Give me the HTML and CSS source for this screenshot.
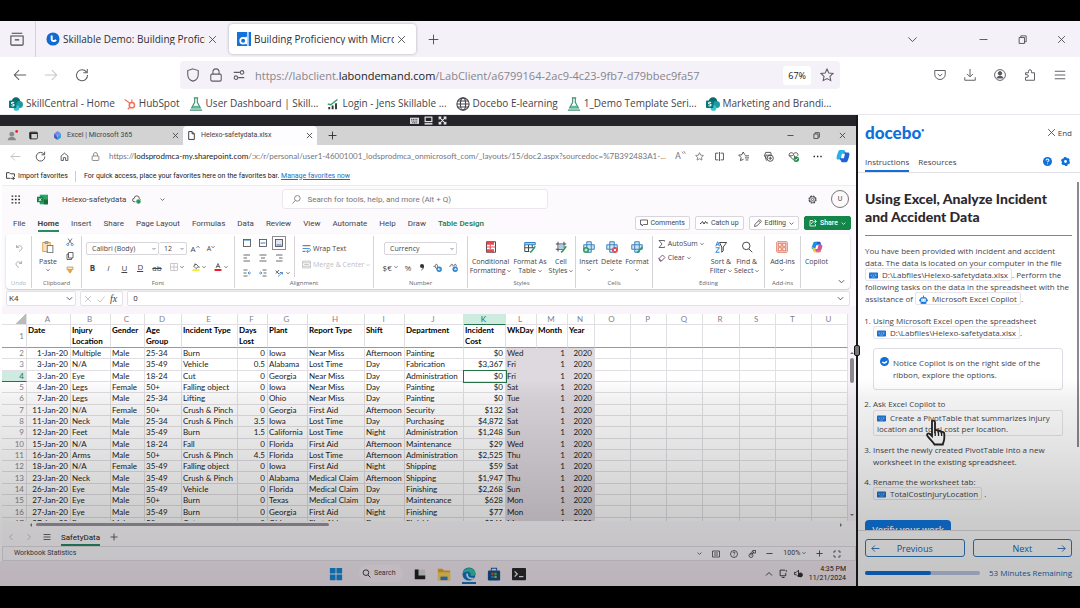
FILE: index.html
```html
<!DOCTYPE html>
<html lang="en">
<head>
  <meta charset="UTF-8">
  <meta name="viewport" content="width=device-width, initial-scale=1.0">
  <title>Building Proficiency with Microsoft Copilot</title>
  <link rel="stylesheet" href="styles.css">
</head>

<body>
  <!-- shared icons -->
  <svg class="sprite" aria-hidden="true">
    <symbol id="x" viewBox="0 0 16 16"><path d="M2 2l12 12M14 2L2 14"/></symbol>
    <symbol id="plus" viewBox="0 0 16 16"><path d="M8 1v14M1 8h14"/></symbol>
    <symbol id="minus" viewBox="0 0 16 16"><path d="M1 8h14"/></symbol>
    <symbol id="down" viewBox="0 0 16 16"><path d="M2 5l6 6 6-6"/></symbol>
    <symbol id="up" viewBox="0 0 16 16"><path d="M2 11l6-6 6 6"/></symbol>
    <symbol id="back" viewBox="0 0 16 16"><path d="M15 8H1.500M7 2.500L1.500 8 7 13.500"/></symbol>
    <symbol id="fwd" viewBox="0 0 16 16"><path d="M1 8h13.500M9 2.500L14.500 8 9 13.500"/></symbol>
    <symbol id="reload" viewBox="0 0 16 16"><path d="M13 4.500A6.300 6.300 0 1 0 14.300 8M14 1v4.500H9.500"/></symbol>
    <symbol id="restore" viewBox="0 0 16 16"><path d="M2 4.500h9.500V15H2zM5 4V1.500h9.500V12H12"/></symbol>
    <symbol id="star" viewBox="0 0 16 16"><path d="M8 1.200l2.100 4.400 4.800.600-3.500 3.400.900 4.800L8 12l-4.300 2.400.900-4.800L1.100 6.200l4.800-.600z"/></symbol>
    <symbol id="lock" viewBox="0 0 16 16"><rect x="2" y="7" width="12" height="8" rx="1.500"/><path d="M4.500 7V4.500a3.500 3.500 0 0 1 7 0V7"/></symbol>
    <symbol id="glass" viewBox="0 0 16 16"><circle cx="7" cy="6.500" r="5"/><path d="M10.500 10.500L15 15"/></symbol>
    <symbol id="glassflip" viewBox="0 0 16 16"><circle cx="9.500" cy="6" r="5"/><path d="M6 9.500L1 15"/></symbol>
    <symbol id="sharepoint" viewBox="0 0 16 16"><circle cx="8" cy="5" r="4.800" fill="#0b6a6e" stroke="none"/><circle cx="12" cy="8.500" r="4" fill="#1a9ba1" stroke="none"/><circle cx="8.500" cy="12.500" r="3.300" fill="#37c6d0" stroke="none"/><rect x="0" y="4" width="8.500" height="8.500" rx="1" fill="#04777c" stroke="none"/><path d="M5.800 6.300c-1-.700-3-.500-3 .700 0 1.300 3 .900 3 2.200 0 1.200-2 1.400-3.200.700" stroke="#fff" stroke-width="1.200"/></symbol>
    <symbol id="flask" viewBox="0 0 16 16"><path d="M5.500 1h5M6.500 1v5L3 12.500h10L9.500 6V1M1 15h14" stroke="#3f8f72" stroke-width="1.300"/><path d="M5 10h6l1.200 2.200H3.800z" fill="#57c297" stroke="none"/></symbol>
    <symbol id="keyb" viewBox="0 0 18 14"><rect x="0" y="1" width="18" height="12" rx="1.500" fill="#1a6fcf" stroke="none"/><path d="M3 4.500h2M7 4.500h2M11 4.500h4M3 7h3M8 7h2M12 7h3M5 10h8" stroke="#a8cdf5" stroke-width="1.200"/></symbol>
    <symbol id="copilot" viewBox="0 0 16 16"><path d="M5 1h4.500L12 5.500 8.500 6 6.500 12H2.500C0 12 .500 9 1.200 7L2.500 3C3 1.600 3.600 1 5 1z" fill="#28b3e6" stroke="none"/><path d="M11 15H6.500L4 10.500l3.500-.500 2-6h4c2.500 0 2 3 1.300 5l-1.300 4c-.500 1.400-1.100 2-3 2z" fill="#1f62d6" stroke="none"/><path d="M6.800 5.500h3.400L9 10.500H5.700z" fill="#fff" stroke="none"/></symbol>
  </svg>

  <!-- outer browser -->
  <header class="tabstrip">
    <button class="ib view" aria-label="View tabs"><svg class="i14" viewBox="0 0 16 16"><path d="M2 1.500h12M1 4.500h14v9.500a1 1 0 0 1-1 1H2a1 1 0 0 1-1-1zM5.500 9h5"/></svg></button>
    <a class="ftab" href="#"><svg class="i14" viewBox="0 0 16 16"><circle cx="8" cy="8" r="7.500" fill="#1269d3" stroke="none"/><path d="M6.500 4v4.500c0 2 3.500 2.500 5 .500" stroke="#fff" stroke-width="2.200"/></svg><span>Skillable Demo: Building Profici</span><svg class="i9"><use href="#x"/></svg></a>
    <a class="ftab on" href="#"><svg class="i14" viewBox="0 0 16 16"><path d="M0 0h16v16H0z" fill="#1172dc" stroke="none"/><path d="M12.500 0v16" stroke="#fff" stroke-width="1.500"/><path d="M10.500 5.500V14" stroke="#fff" stroke-width="2"/><circle cx="7" cy="10" r="3.300" stroke="#fff" stroke-width="2"/></svg><span>Building Proficiency with Micros</span><svg class="i9"><use href="#x"/></svg></a>
    <button class="ib" aria-label="New tab"><svg class="i11"><use href="#plus"/></svg></button>
    <div class="wincontrols">
      <button class="ib" aria-label="List all tabs"><svg class="i11"><use href="#down"/></svg></button>
      <button class="ib gap" aria-label="Minimize"><svg class="i9"><use href="#minus"/></svg></button>
      <button class="ib" aria-label="Restore"><svg class="i9"><use href="#restore"/></svg></button>
      <button class="ib" aria-label="Close"><svg class="i9"><use href="#x"/></svg></button>
    </div>
  </header>

  <nav class="navbar">
    <button class="ib" aria-label="Back"><svg class="i14"><use href="#back"/></svg></button>
    <button class="ib off" aria-label="Forward"><svg class="i14"><use href="#fwd"/></svg></button>
    <button class="ib" aria-label="Reload"><svg class="i14"><use href="#reload"/></svg></button>
    <div class="urlbar">
      <svg class="i14" viewBox="0 0 16 16"><path d="M8 1l6 2v4c0 4-2.500 7-6 8-3.500-1-6-4-6-8V3z"/></svg>
      <svg class="i14"><use href="#lock"/></svg>
      <svg class="i14" viewBox="0 0 16 16"><path d="M2 5h7M7 11h7"/><circle cx="11.500" cy="5" r="2"/><circle cx="4.500" cy="11" r="2"/></svg>
      <a href="#" class="url">https://labclient.<b>labondemand.com</b>/LabClient/a6799164-2ac9-4c23-9fb7-d79bbec9fa57</a>
      <span class="zoom">67%</span>
      <svg class="i14"><use href="#star"/></svg>
    </div>
    <div class="tools">
      <button class="ib" aria-label="Pocket"><svg class="i12" viewBox="0 0 16 16"><path d="M1 2h14v5a7 7 0 0 1-14 0zM5 6.500l3 3 3-3"/></svg></button>
      <button class="ib" aria-label="Downloads"><svg class="i12" viewBox="0 0 16 16"><path d="M8 0v10M4 6.500l4 4 4-4M1 11v4h14v-4"/></svg></button>
      <button class="ib" aria-label="Account"><svg class="i12" viewBox="0 0 16 16"><circle cx="8" cy="8" r="7.200"/><circle cx="8" cy="5.800" r="2.400" fill="#555"/><path d="M4 12c0-3 8-3 8 0z" fill="#555"/></svg></button>
      <button class="ib" aria-label="Extensions"><svg class="i12" viewBox="0 0 16 16"><path d="M2 5h4V3a2 2 0 0 1 4 0v2h4v10H2v-4h2a1.700 1.700 0 0 0 0-3.500H2z"/></svg></button>
      <button class="ib" aria-label="Menu"><svg class="i12" viewBox="0 0 16 16"><path d="M1 3h14M1 8h14M1 13h14"/></svg></button>
    </div>
  </nav>

  <nav class="bookmarks">
    <a href="#"><svg class="i14"><use href="#sharepoint"/></svg>SkillCentral - Home</a>
    <a href="#"><svg class="i12" viewBox="0 0 16 16"><circle cx="10.500" cy="9.500" r="3.500" stroke="#f2715a" stroke-width="2"/><path d="M1 2l7 5M10.500 6V2M8 12l-3 3" stroke="#f2715a" stroke-width="1.600"/></svg>HubSpot</a>
    <a href="#"><svg class="i14"><use href="#flask"/></svg>User Dashboard | Skill...</a>
    <a href="#"><svg class="i12" viewBox="0 0 16 16"><path d="M3 12v3M7.500 10v5M12 7v8" stroke="#333" stroke-width="2.500"/><path d="M1 8l4 1 9-7" stroke="#35a06e" stroke-width="2"/></svg>Login - Jens Skillable ...</a>
    <a href="#"><svg class="i14" viewBox="0 0 16 16"><circle cx="8" cy="8" r="7"/><ellipse cx="8" cy="8" rx="3" ry="7"/><path d="M1 8h14M2 4.500h12M2 11.500h12"/></svg>Docebo E-learning</a>
    <a href="#"><svg class="i14"><use href="#flask"/></svg>1_Demo Template Seri...</a>
    <a href="#"><svg class="i14"><use href="#sharepoint"/></svg>Marketing and Brandi...</a>
  </nav>

  <main class="lab">
    <section class="vm">
      <div class="vmbar">
        <svg class="i9" viewBox="0 0 16 16"><rect x="0" y="3" width="16" height="11" fill="#ddd" stroke="none"/><path d="M2 6h12M2 9h12M4 12h8" stroke="#333" stroke-dasharray="2 1"/></svg>
        <svg class="i9" viewBox="0 0 16 16"><rect x="2" y="2" width="12" height="8" stroke="#eee" stroke-width="2"/><path d="M1 14h14" stroke="#eee" stroke-width="2.500"/></svg>
        <svg class="i9" viewBox="0 0 16 16"><path d="M2 6V2h4M10 2h4v4M14 10v4h-4M6 14H2v-4M3 3l10 10M13 3L3 13" stroke="#eee" stroke-width="1.800"/></svg>
      </div>

      <div class="edgetabs">
        <svg class="i11" viewBox="0 0 16 16"><circle cx="7" cy="6" r="3.500" fill="#888" stroke="none"/><path d="M1 15c0-7 12-7 12 0z" fill="#888" stroke="none"/><circle cx="14" cy="2" r="2" fill="#e02020" stroke="none"/></svg>
        <svg class="i9 dark" viewBox="0 0 16 16"><rect x="1" y="2" width="14" height="12" rx="2"/><path d="M1 4h14M3 5v9" stroke-width="2.500"/></svg>
        <a class="etab" href="#"><svg class="i9" viewBox="0 0 16 16"><path d="M8 0l6 4-6 4-4 3-2-6z" fill="#7c86e8" stroke="none"/><path d="M14 4v8l-6 4V9z" fill="#2f9de0" stroke="none"/><path d="M2 5l6 6v5l-6-4z" fill="#3b57c9" stroke="none"/></svg><span>Excel | Microsoft 365</span><svg class="i6"><use href="#x"/></svg></a>
        <a class="etab on" href="#"><svg class="i9 dark" viewBox="0 0 16 16"><path d="M3 1h6l4 4v10H3zM9 1v4h4"/></svg><span>Helexo-safetydata.xlsx</span><svg class="i6"><use href="#x"/></svg></a>
        <button class="ib" aria-label="New tab"><svg class="i9 dark"><use href="#plus"/></svg></button>
        <div class="ewin">
          <svg class="i6"><use href="#minus"/></svg>
          <svg class="i6"><use href="#restore"/></svg>
          <svg class="i6"><use href="#x"/></svg>
        </div>
      </div>

      <div class="edgebar">
        <svg class="i11 off"><use href="#back"/></svg>
        <svg class="i11"><use href="#reload"/></svg>
        <svg class="i9" viewBox="0 0 16 16"><path d="M2 7l6-5 6 5v8h-4v-5H6v5H2z"/></svg>
        <div class="eurl">
          <svg class="i9"><use href="#lock"/></svg>
          <a href="#">https://<b>lodsprodmca-my.sharepoint.com</b>/:x:/r/personal/user1-46001001_lodsprodmca_onmicrosoft_com/_layouts/15/doc2.aspx?sourcedoc=%7B392483A1-...</a>
          <span class="aloud">A<svg class="i5" viewBox="0 0 16 16"><path d="M3 2l5 7M9 0l5 9"/></svg></span>
          <svg class="i9"><use href="#star"/></svg>
        </div>
        <div class="etools">
          <svg class="i9" viewBox="0 0 16 16"><path d="M6 2H1v12h5M10 2h5v12h-5M8 0v16"/></svg>
          <svg class="i11" viewBox="0 0 16 16"><path d="M10 5.500L7.500 1.500l-2 4L1 6l3.500 3.500-1 4.500L8 12M10 7h6M10 10h6M11 13h4"/></svg>
          <svg class="i11" viewBox="0 0 16 16"><path d="M5 11L2 7l2-5h7l1 3M5 14l-1-3V6h9"/><circle cx="10.500" cy="10.500" r="4.500"/><path d="M10.500 8v5M8 10.500h5"/></svg>
          <svg class="i11" viewBox="0 0 16 16"><path d="M8 13L2 7c-2-4 3-6 6-3 3-3 8-1 6 3M2 7h4l2-2 2 4h3"/><circle cx="12" cy="12" r="4" fill="#1f8a48" stroke="none"/><path d="M10 12l1.500 1.500L14 10.500" stroke="#fff"/></svg>
          <svg class="i9 dark" viewBox="0 0 16 16"><path d="M1 8h2.500M7 8h2.500M13 8h2.500" stroke-width="2.500"/></svg>
          <svg class="i14"><use href="#copilot"/></svg>
        </div>
      </div>

      <div class="favbar">
        <a href="#"><svg class="i9 dark" viewBox="0 0 16 16"><path d="M8 13H1V3h5l2 2h7v5M9 13h6M12 10l3 3-3 3"/></svg>Import favorites</a>
        <p>For quick access, place your favorites here on the favorites bar. <a href="#">Manage favorites now</a></p>
      </div>

      <div class="excel">
        <div class="xhead">
          <svg class="i9 dark" viewBox="0 0 16 16"><path d="M1 2h3M7 2h3M13 2h3M1 8h3M7 8h3M13 8h3M1 14h3M7 14h3M13 14h3" stroke-width="2.500"/></svg>
          <svg class="i11" viewBox="0 0 16 16"><path d="M4 1h12v14H4z" fill="#2aa568" stroke="none"/><path d="M10 8h6v7h-6z" fill="#176b3d" stroke="none"/><path d="M0 4h9v8H0z" fill="#107c41" stroke="none"/><path d="M2.500 6l4 4.500M6.500 6l-4 4.500" stroke="#fff" stroke-width="1.300"/></svg>
          <h1>Helexo-safetydata</h1>
          <svg class="i9" viewBox="0 0 16 16"><path d="M6 12H4a3 3 0 0 1 0-6 4.500 4.500 0 0 1 9 0l2 2"/><circle cx="11.500" cy="11.500" r="4" fill="#2c9a5c" stroke="none"/></svg>
          <svg class="i5"><use href="#down"/></svg>
          <label class="xsearch"><svg class="i9"><use href="#glassflip"/></svg><input type="search" placeholder="Search for tools, help, and more (Alt + Q)" aria-label="Search"></label>
          <svg class="i9 gear" viewBox="0 0 16 16"><circle cx="8" cy="8" r="6" stroke-width="2.500" stroke-dasharray="3 1.700"/><circle cx="8" cy="8" r="5" fill="#fff"/><circle cx="8" cy="8" r="2"/></svg>
          <span class="avatar">U</span>
        </div>

        <nav class="xtabs">
          <a href="#">File</a><a href="#" class="on">Home</a><a href="#">Insert</a><a href="#">Share</a><a href="#">Page Layout</a><a href="#">Formulas</a><a href="#">Data</a><a href="#">Review</a><a href="#">View</a><a href="#">Automate</a><a href="#">Help</a><a href="#">Draw</a><a href="#" class="design">Table Design</a>
          <div class="xactions">
            <button><svg class="i8" viewBox="0 0 16 16"><path d="M1 2h14v9H7l-3 3v-3H1z"/></svg>Comments</button>
            <button><svg class="i8" viewBox="0 0 16 16"><path d="M0 9h2l3-4 3 5 3-5 2 3h3" stroke-width="2"/></svg>Catch up</button>
            <button><svg class="i8" viewBox="0 0 16 16"><path d="M1 15l1-4.500L11.500 1l3.500 3.500L5.500 14zM9 3.500L12.500 7"/></svg>Editing<svg class="i5"><use href="#down"/></svg></button>
            <button class="share"><svg class="i8" viewBox="0 0 16 16"><path d="M8 3H2v11h11v-4M5 10c0-4 4-5 9-5M11 1l4 4-4 4"/></svg>Share<svg class="i5"><use href="#down"/></svg></button>
          </div>
        </nav>

        <div class="ribbon">
          <div class="group undo">
            <div class="stack off"><svg class="i8" viewBox="0 0 16 16"><path d="M3 2v5h5M3 7c4-6 11-3 11 1 0 3-3 5-6 7"/></svg><svg class="i8" viewBox="0 0 16 16"><path d="M13 2v5H8M13 7C9 1 2 4 2 8c0 3 3 5 6 7"/></svg></div>
            <small>Undo</small>
          </div>
          <div class="group clip">
            <div class="row">
              <button class="big"><svg class="i12" viewBox="0 0 16 16"><rect x="1" y="2" width="10" height="12" fill="#fbe3bd" stroke="#e0a04c"/><path d="M4 1h4v2H4z" fill="#fff" stroke="#777"/><rect x="7" y="6" width="7.500" height="9.500" fill="#fff" stroke="#777"/></svg>Paste<svg class="i4"><use href="#down"/></svg></button>
              <div class="stack">
                <svg class="i8" viewBox="0 0 16 16"><path d="M4 1l7 10M12 1L5 11" stroke="#555"/><circle cx="3.500" cy="13" r="2.200" stroke="#2c7fd0"/><circle cx="12.500" cy="13" r="2.200" stroke="#2c7fd0"/></svg>
                <svg class="i8" viewBox="0 0 16 16"><path d="M5 1h9v11H5zM5 4H2v11h9v-3"/></svg>
                <svg class="i8" viewBox="0 0 16 16"><path d="M2 2h12v5H2z" fill="#ffe9a8" stroke="#999"/><path d="M3 7h10l-2 5-3 3-3-3z" fill="#eda23c" stroke="none"/></svg>
              </div>
            </div>
            <small>Clipboard</small>
          </div>
          <div class="group font">
            <div class="row combos">
              <select aria-label="Font" class="fname"><option>Calibri (Body)</option></select>
              <select aria-label="Font size" class="fsize"><option>12</option></select>
              <button>A<svg class="i4"><use href="#up"/></svg></button><button class="smaller">A<svg class="i4"><use href="#down"/></svg></button>
            </div>
            <div class="row letters">
              <button><b>B</b></button><button><i>I</i></button><button><u>U</u></button><button><u class="dbl">D</u></button><button><s>ab</s></button>
              <button><svg class="i8 off" viewBox="0 0 16 16"><path d="M1 1h14v14H1zM8 1v14M1 8h14"/></svg><svg class="i4"><use href="#down"/></svg></button>
              <button><svg class="i8" viewBox="0 0 16 16"><path d="M3 6l5-4 5 5-5 4zM6 1v4M14 7v3"/><path d="M1 12h14v4H1z" fill="#f5ee31" stroke="none"/></svg><svg class="i4"><use href="#down"/></svg></button>
              <button><svg class="i8" viewBox="0 0 16 16"><path d="M4 10l4-9 4 9M5.500 7h5"/><path d="M1 12h14v4H1z" fill="#e8202a" stroke="none"/></svg><svg class="i4"><use href="#down"/></svg></button>
            </div>
            <small>Font</small>
          </div>
          <div class="group align">
            <div class="row">
              <div class="alignicons">
                <svg class="i8" viewBox="0 0 16 16"><rect x="1" y="1" width="14" height="14"/><path d="M1 2h14" stroke="#2c7fd0" stroke-width="2"/></svg>
                <svg class="i8" viewBox="0 0 16 16"><rect x="1" y="1" width="14" height="14"/><path d="M3 8h10" stroke="#2c7fd0" stroke-width="2"/></svg>
                <svg class="i8 picked" viewBox="0 0 16 16"><rect x="1" y="1" width="14" height="14"/><path d="M3 12h10" stroke="#2c7fd0" stroke-width="2"/></svg>
                <svg class="i8" viewBox="0 0 16 16"><path d="M1 2h13M1 8h7M1 14h13"/></svg>
                <svg class="i8" viewBox="0 0 16 16"><path d="M1 2h14M4 8h8M1 14h14"/></svg>
                <svg class="i8" viewBox="0 0 16 16"><path d="M2 2h13M8 8h7M2 14h13"/></svg>
                <svg class="i8" viewBox="0 0 16 16"><path d="M1 2h8M1 8h6M1 14h8"/><path d="M16 8h-5M13 5l-3 3 3 3" stroke="#2c7fd0"/></svg>
                <svg class="i8" viewBox="0 0 16 16"><path d="M7 2h8M9 8h6M7 14h8"/><path d="M0 8h5M3 5l3 3-3 3" stroke="#2c7fd0"/></svg>
                <svg class="i8" viewBox="0 0 16 16"><path d="M1 3l7 7M2 9l6-7M9 9l3-3"/><path d="M6 15l9-8M11 7h4v4" stroke="#2c7fd0" stroke-width="1.600"/></svg>
              </div>
              <svg class="i4 rot"><use href="#down"/></svg>
              <div class="wrap">
                <button><svg class="i9" viewBox="0 0 16 16"><path d="M1 3h14M1 13h5"/><path d="M1 8h11c4 0 4 5 0 5H9M11 10l-3 3 3 3" stroke="#2c7fd0"/></svg>Wrap Text</button>
                <button class="off" disabled><svg class="i9" viewBox="0 0 16 16"><path d="M1 2h14v12H1zM1 5h14M1 11h14M4 8h8"/></svg>Merge &amp; Center <svg class="i4"><use href="#down"/></svg></button>
              </div>
            </div>
            <small>Alignment</small>
          </div>
          <div class="group number">
            <select aria-label="Number format" class="fnum"><option>Currency</option></select>
            <div class="row syms">
              <button>$€ <svg class="i4"><use href="#down"/></svg></button><button>%</button>
              <button aria-label="Comma style"><svg class="i8" viewBox="0 0 16 16"><circle cx="8" cy="6" r="4" fill="#333" stroke="none"/><path d="M11 6c0 4-1 6-4 8" stroke="#333" stroke-width="2"/></svg></button>
              <button aria-label="Increase decimal"><svg class="i9" viewBox="0 0 16 16"><path d="M1 6h2M4 6c0-5 4-5 4 0s-4 5-4 0"/><circle cx="11" cy="11" r="4.800" fill="#2c86d3" stroke="none"/><path d="M13 11H9M11 9l-2 2 2 2" stroke="#fff"/></svg></button>
              <button aria-label="Decrease decimal"><svg class="i9" viewBox="0 0 16 16"><path d="M0 6h1M3 6c0-5 4-5 4 0M9 6c0-5 4-5 4 0"/><circle cx="11" cy="11" r="4.800" fill="#2c86d3" stroke="none"/><path d="M9 11h4M11 9l2 2-2 2" stroke="#fff"/></svg></button>
            </div>
            <small>Number</small>
          </div>
          <div class="group styles">
            <div class="row">
              <button class="big"><svg class="i12" viewBox="0 0 16 16"><path d="M2 1h12v14H2z"/><path d="M2 1h10v4H2zM2 11h10v4H2z" fill="#e5484d" stroke="none"/><path d="M2 8h12M7 5v6" stroke="#e5484d"/></svg>Conditional<span>Formatting <svg class="i4"><use href="#down"/></svg></span></button>
              <button class="big"><svg class="i12" viewBox="0 0 16 16"><path d="M1 2h14v3H1z" fill="#9fd0f5" stroke="#2c7fd0"/><path d="M1 5v9h6M1 9h13M6 5v9M11 5v4"/><path d="M15 7l-5 7-2 1" stroke="#2c9a5c" stroke-width="2"/></svg>Format As<span>Table <svg class="i4"><use href="#down"/></svg></span></button>
              <button class="big"><svg class="i12" viewBox="0 0 16 16"><path d="M4 1v13M12 1v9M1 4h14M1 11h10"/><path d="M5 5h6v5H5z" fill="#9fd0f5" stroke="none"/><path d="M15 7l-5 7-2 1" stroke="#2c9a5c" stroke-width="2"/></svg>Cell<span>Styles <svg class="i4"><use href="#down"/></svg></span></button>
            </div>
            <small>Styles</small>
          </div>
          <div class="group cells">
            <div class="row">
              <button class="big"><svg class="i12" viewBox="0 0 16 16"><path d="M5 1h6v4h4v6h-4v4H5v-4H1V5h4zM5 5h6v6H5z" fill="#cfe6fa" stroke="#3b7fb8"/><circle cx="4" cy="12" r="4" fill="#2c9a5c" stroke="none"/><path d="M4 10v4M2 12h4" stroke="#fff"/></svg>Insert<svg class="i4"><use href="#down"/></svg></button>
              <button class="big"><svg class="i12" viewBox="0 0 16 16"><path d="M5 1h6v4h4v6h-4v4H5v-4H1V5h4zM5 5h6v6H5z" fill="#cfe6fa" stroke="#3b7fb8"/><circle cx="12" cy="12" r="4" fill="#e5484d" stroke="none"/><path d="M10.500 10.500l3 3M13.500 10.500l-3 3" stroke="#fff"/></svg>Delete<svg class="i4"><use href="#down"/></svg></button>
              <button class="big"><svg class="i12" viewBox="0 0 16 16"><path d="M5 1h6v4h4v6h-4v4H5v-4H1V5h4zM5 5h6v6H5z" fill="#cfe6fa" stroke="#3b7fb8"/><path d="M15 8l-5 6-2 1" stroke="#2c9a5c" stroke-width="2"/></svg>Format<svg class="i4"><use href="#down"/></svg></button>
            </div>
            <small>Cells</small>
          </div>
          <div class="group edit">
            <div class="row">
              <div class="sums">
                <button><svg class="i8" viewBox="0 0 16 16"><path d="M13 3V1H2l6 7-6 7h11v-2"/></svg>AutoSum <svg class="i4"><use href="#down"/></svg></button>
                <button><svg class="i8" viewBox="0 0 16 16"><path d="M2 9l7-7 5 5-7 7H4z"/><path d="M2 9l5 5H4z" stroke="#b04cc4" stroke-width="2"/></svg>Clear <svg class="i4"><use href="#down"/></svg></button>
              </div>
              <button class="big"><svg class="i12" viewBox="0 0 16 16"><path d="M1 7l2.500-6L6 7M2 5h3M1 9h5l-5 6h5" stroke="#2c7fd0"/><path d="M6 2h9.500L11 8v5l-2 2V8z"/></svg>Sort &amp;<span>Filter <svg class="i4"><use href="#down"/></svg></span></button>
              <button class="big"><svg class="i12"><use href="#glass"/></svg>Find &amp;<span>Select <svg class="i4"><use href="#down"/></svg></span></button>
            </div>
            <small>Editing</small>
          </div>
          <div class="group addins">
            <button class="big"><svg class="i12" viewBox="0 0 16 16"><g stroke="#e2725b"><rect x="1" y="1" width="14" height="14" rx="1"/><rect x="3" y="3" width="4" height="4"/><rect x="9" y="3" width="4" height="4"/><rect x="3" y="9" width="4" height="4"/><rect x="9" y="9" width="4" height="4"/></g></svg>Add-ins<svg class="i4"><use href="#down"/></svg></button>
            <small>Add-ins</small>
          </div>
          <div class="group copilot">
            <button class="big"><svg class="i12" viewBox="0 0 16 16"><path d="M5 1h4l1 4-3 6H3C0 11 1 8 1.500 6.500L3 2.500C3.400 1.500 4 1 5 1z" fill="#1d8fe0" stroke="none"/><path d="M7.500 1H11c1 0 1.600.600 2 2l.500 2H10z" fill="#2c55c9" stroke="none"/><path d="M1.500 8L6 10l1 5H5c-1 0-1.600-.600-2-2z" fill="#f0c33a" stroke="none"/><path d="M11 15H7l-1-4 3-6h4c3 0 2 3 1.500 4.500L13 13.500c-.400 1-1 1.500-2 1.500z" fill="#d3549c" stroke="none"/><path d="M7 15h4c1 0 1.500-.500 2-1.500l.500-1.500L7 13z" fill="#ef7b4d" stroke="none"/><path d="M7 5.500h3L8.500 10.500H5.700z" fill="#fff" stroke="none"/></svg>Copilot</button>
          </div>
          <svg class="i6 collapse"><use href="#down"/></svg>
        </div>

        <div class="formulabar">
          <label class="namebox"><input value="K4" aria-label="Name box"><svg class="i6"><use href="#down"/></svg></label>
          <div class="fx"><svg class="i8 off"><use href="#x"/></svg><svg class="i8 off" viewBox="0 0 16 16"><path d="M1 9l5 5L15 3"/></svg><i>fx</i></div>
          <label class="formula"><input value="0" aria-label="Formula"><svg class="i6"><use href="#down"/></svg></label>
        </div>

        <div class="gridbox">
          <div class="gridview">
            <table class="grid">
              <colgroup>
                <col class="w25"><col class="w44"><col class="w40"><col class="w34"><col class="w37"><col class="w56"><col class="w30"><col class="w40"><col class="w57"><col class="w40"><col class="w59"><col class="w42"><col class="w31"><col class="w31"><col class="w27"><col span="7">
              </colgroup>
              <thead>
                <tr class="heads"><th class="corner"></th><th>A</th><th>B</th><th>C</th><th>D</th><th>E</th><th>F</th><th>G</th><th>H</th><th>I</th><th>J</th><th class="sel">K</th><th>L</th><th>M</th><th>N</th><th>O</th><th>P</th><th>Q</th><th>R</th><th>S</th><th>T</th><th>U</th></tr>
                <tr class="titles"><th>1</th><td>Date</td><td>Injury<br>Location</td><td>Gender</td><td>Age<br>Group</td><td>Incident Type</td><td>Days<br>Lost</td><td>Plant</td><td>Report Type</td><td>Shift</td><td>Department</td><td>Incident<br>Cost</td><td>WkDay</td><td>Month</td><td>Year</td><td></td><td></td><td></td><td></td><td></td><td></td><td></td></tr>
              </thead>
              <tbody id="rows"></tbody>
            </table>
          </div>
          <div class="vscroll"><i class="tri up"></i><i class="thumb"></i><i class="tri dn"></i></div>
        </div>
        <div class="hscroll"><i class="tri lf"></i><i class="thumb"></i><i class="tri rt"></i></div>

        <div class="sheets">
          <svg class="i8 off" viewBox="0 0 16 16"><path d="M11 2L5 8l6 6"/></svg>
          <svg class="i8 off" viewBox="0 0 16 16"><path d="M5 2l6 6-6 6"/></svg>
          <svg class="i8" viewBox="0 0 16 16"><path d="M1 3h14M1 8h14M1 13h14"/></svg>
          <a href="#">SafetyData</a>
          <svg class="i8"><use href="#plus"/></svg>
        </div>
        <div class="status">
          <span>Workbook Statistics</span>
          <div>
            <svg class="i5"><use href="#down"/></svg>
            <svg class="i8" viewBox="0 0 16 16"><path d="M1 2h14v12H1zM4 6h8M4 10h8"/></svg>
            <svg class="i8" viewBox="0 0 16 16"><circle cx="8" cy="8" r="7"/><path d="M6 6c0-3 4-3 4 0 0 1-2 1.500-2 3M8 11v1.500"/></svg>
            <svg class="i8" viewBox="0 0 16 16"><circle cx="6" cy="11" r="4"/><path d="M6 11c-2-6 2-8 4-9M8 8l4-4"/><rect x="10" y="1" width="5" height="5"/></svg>
            <svg class="i6"><use href="#minus"/></svg>
            <span>100% <svg class="i4"><use href="#down"/></svg></span>
            <svg class="i6"><use href="#plus"/></svg>
            <svg class="i8" viewBox="0 0 16 16"><path d="M2 6V2h4M10 2h4v4M14 10v4h-4M6 14H2v-4"/></svg>
          </div>
        </div>
      </div>

      <div class="taskbar">
        <div class="apps">
          <svg class="i14" viewBox="0 0 16 16"><path d="M1 1h6.500v6.500H1zM8.500 1H15v6.500H8.500zM1 8.500h6.500V15H1zM8.500 8.500H15V15H8.500z" fill="#1689d8" stroke="none"/></svg>
          <label class="tsearch"><svg class="i9 dark"><use href="#glass"/></svg><input type="text" placeholder="Search" aria-label="Search the desktop"></label>
          <svg class="i12" viewBox="0 0 16 16"><path d="M5 2h10v9H5z" fill="#d8d8d8" stroke="none"/><path d="M1 2h5v8h9v5H1z" fill="#222" stroke="none"/></svg>
          <svg class="i14" viewBox="0 0 16 16"><path d="M1 2h5l2 2h7v11H1z" fill="#e8a92a" stroke="none"/><path d="M1 6h14v9H1z" fill="#fbd35b" stroke="none"/><path d="M4 11h8v4H4z" fill="#2d7fc8" stroke="none"/></svg>
          <span class="running"><svg class="i14" viewBox="0 0 16 16"><circle cx="8" cy="8" r="7.500" fill="#1273c4" stroke="none"/><path d="M1 7C2 0 14-1 15.500 7c.300 3-4 4-6 2.500C11 7 8 4 5 5.500 3 6 1.500 7 1 7z" fill="#38c6a0" stroke="none"/><path d="M6 7.500c-1 4 2 6.500 7 5.500" stroke="#d9f2ff" stroke-width="2"/></svg></span>
          <svg class="i14" viewBox="0 0 16 16"><path d="M5 4V1.500h6V4" stroke="#1a5fa8"/><rect x="1" y="4" width="14" height="11.500" rx="1.500" fill="#134f8f" stroke="none"/><path d="M5 6.500h2.500V9H5z" fill="#f25022" stroke="none"/><path d="M8.500 6.500H11V9H8.500z" fill="#7fba00" stroke="none"/><path d="M5 10h2.500v2.500H5z" fill="#00a4ef" stroke="none"/><path d="M8.500 10H11v2.500H8.500z" fill="#ffb900" stroke="none"/></svg>
          <svg class="i14" viewBox="0 0 16 16"><rect x="0" y="1" width="16" height="14" rx="1" fill="#2a2a2e" stroke="none"/><path d="M3 5l3 3-3 3M8 11h5" stroke="#eee" stroke-width="1.500"/></svg>
        </div>
        <div class="tray">
          <svg class="i8 dark"><use href="#up"/></svg>
          <svg class="i9 dark" viewBox="0 0 16 16"><path d="M11 2H2v10h10V7M5 15h5M13 2v3"/></svg>
          <svg class="i9 dark" viewBox="0 0 16 16"><path d="M1 6h3l4-4v12l-4-4H1z"/><circle cx="11.500" cy="10.500" r="3.500" fill="#333"/></svg>
          <time>4:35 PM<br>11/21/2024</time>
        </div>
      </div>
    </section>

    <div class="splitter"><i></i></div>

    <aside class="panel">
      <div class="brand"><strong>docebo<sup>•</sup></strong><a href="#"><svg class="i9"><use href="#x"/></svg>End</a></div>
      <nav class="ptabs"><a href="#" class="on">Instructions</a><a href="#">Resources</a>
        <svg class="i9" viewBox="0 0 16 16"><circle cx="8" cy="8" r="8" fill="#0f6fdb" stroke="none"/><path d="M5.500 6c0-3.500 5-3.500 5 0 0 1.500-2.500 1.500-2.500 3.500M8 11.500v1.500" stroke="#fff" stroke-width="1.800"/></svg>
        <svg class="i9" viewBox="0 0 16 16"><circle cx="8" cy="8" r="4.500" stroke="#0f6fdb" stroke-width="4"/><circle cx="8" cy="8" r="6.500" stroke="#0f6fdb" stroke-width="3" stroke-dasharray="4 2.800"/></svg>
      </nav>
      <div class="content">
        <h2>Using Excel, Analyze Incident and Accident Data</h2>
        <p>You have been provided with incident and accident<br>data. The data is located on your computer in the file<br><code><svg class="i9"><use href="#keyb"/></svg>D:\Labfiles\Helexo-safetydata.xlsx</code>. Perform the<br>following tasks on the data in the spreadsheet with the<br>assistance of <code><svg class="i9" viewBox="0 0 16 16"><rect x="3" y="5" width="10" height="8" rx="2" stroke="#0f6fdb" stroke-width="2"/><path d="M8 5V1M1 8v3M15 8v3M6 9h1M9 9h1M3 15h10" stroke="#0f6fdb" stroke-width="1.600"/></svg>Microsoft Excel Copilot</code>.</p>
        <ol>
          <li>Using Microsoft Excel open the spreadsheet<br><code><svg class="i9"><use href="#keyb"/></svg>D:\Labfiles\Helexo-safetydata.xlsx</code>.
            <div class="note"><svg class="i9" viewBox="0 0 16 16"><circle cx="8" cy="8" r="8" fill="#0f6fdb" stroke="none"/><path d="M3 9c1-1 3-1 4 0s3-2 6-3c0 6-7 8-10 3z" fill="#fff" stroke="none"/></svg><span>Notice Copilot is on the right side of the<br>ribbon, explore the options.</span></div>
          </li>
          <li>Ask Excel Copilot to<br><code class="block"><svg class="i9"><use href="#keyb"/></svg>Create a PivotTable that summarizes injury<br>location and total cost per location.</code></li>
          <li>Insert the newly created PivotTable into a new<br>worksheet in the existing spreadsheet.</li>
          <li>Rename the worksheet tab:<br><code><svg class="i9"><use href="#keyb"/></svg>TotalCostInjuryLocation</code> .</li>
        </ol>
        <button class="verify">Verify your work</button>
        <i class="pthumb"></i>
      </div>
      <div class="pfoot">
        <div class="steps">
          <button class="prev"><svg class="i9"><use href="#back"/></svg><span>Previous</span></button>
          <button class="next"><span>Next</span><svg class="i9"><use href="#fwd"/></svg></button>
        </div>
        <div class="time"><progress value="57" max="100" aria-label="Time"></progress><span>53 Minutes Remaining</span></div>
      </div>
      <svg class="hand" viewBox="0 0 22 28"><path d="M7 2c1.500-1 3 0 3 1.500V12c1-1.500 3-1 3.300.500 1-1 2.700-.700 3 .700 1-.700 3 0 3 1.800V19c0 3-1 4-1.500 6.500H9.500C8 22.500 4.500 20 2.500 17 1 15 3.500 13.500 5 15l2 2V3z" fill="#fff" stroke="#222" stroke-width="1.800"/><path d="M10.200 13v4M13.500 13v4M16.600 14v3" stroke="#222" stroke-width="1.300"/></svg>
    </aside>
    <div class="shade"></div>
  </main>

  <script>
    const rows = [
      ['1-Jan-20', 'Multiple', 'Male', '25-34', 'Burn', '0', 'Iowa', 'Near Miss', 'Afternoon', 'Painting', '$0', 'Wed'],
      ['3-Jan-20', 'N/A', 'Male', '35-49', 'Vehicle', '0.5', 'Alabama', 'Lost Time', 'Day', 'Fabrication', '$3,367', 'Fri'],
      ['3-Jan-20', 'Eye', 'Male', '18-24', 'Cut', '0', 'Georgia', 'Near Miss', 'Day', 'Administration', '$0', 'Fri'],
      ['4-Jan-20', 'Legs', 'Female', '50+', 'Falling object', '0', 'Iowa', 'Near Miss', 'Day', 'Painting', '$0', 'Sat'],
      ['7-Jan-20', 'Legs', 'Male', '25-34', 'Lifting', '0', 'Ohio', 'Near Miss', 'Day', 'Painting', '$0', 'Tue'],
      ['11-Jan-20', 'N/A', 'Female', '50+', 'Crush & Pinch', '0', 'Georgia', 'First Aid', 'Afternoon', 'Security', '$132', 'Sat'],
      ['11-Jan-20', 'Neck', 'Male', '25-34', 'Crush & Pinch', '3.5', 'Iowa', 'Lost Time', 'Day', 'Purchasing', '$4,872', 'Sat'],
      ['12-Jan-20', 'Feet', 'Male', '35-49', 'Burn', '1.5', 'California', 'Lost Time', 'Night', 'Administration', '$1,248', 'Sun'],
      ['15-Jan-20', 'N/A', 'Male', '18-24', 'Fall', '0', 'Florida', 'First Aid', 'Afternoon', 'Maintenance', '$29', 'Wed'],
      ['16-Jan-20', 'Arms', 'Male', '50+', 'Crush & Pinch', '4.5', 'Florida', 'Lost Time', 'Afternoon', 'Administration', '$2,525', 'Thu'],
      ['18-Jan-20', 'N/A', 'Female', '35-49', 'Falling object', '0', 'Iowa', 'First Aid', 'Night', 'Shipping', '$59', 'Sat'],
      ['23-Jan-20', 'Neck', 'Male', '35-49', 'Crush & Pinch', '0', 'Alabama', 'Medical Claim', 'Afternoon', 'Shipping', '$1,947', 'Thu'],
      ['26-Jan-20', 'Eye', 'Male', '35-49', 'Vehicle', '0', 'Florida', 'Medical Claim', 'Day', 'Finishing', '$2,268', 'Sun'],
      ['27-Jan-20', 'Eye', 'Male', '50+', 'Burn', '0', 'Texas', 'Medical Claim', 'Day', 'Maintenance', '$628', 'Mon'],
      ['27-Jan-20', 'Eye', 'Male', '35-49', 'Burn', '0', 'Georgia', 'First Aid', 'Night', 'Finishing', '$77', 'Mon'],
      ['27-Jan-20', 'Eye', 'Male', '50+', 'Cut', '0', 'Ohio', 'First Aid', 'Day', 'Finishing', '$241', 'Mon']
    ];
    const numeric = [0, 5, 10, 12, 13];
    const body = document.getElementById('rows');

    rows.forEach((data, r) => {
      const row = body.insertRow();
      const head = document.createElement('th');
      head.textContent = r + 2;
      row.appendChild(head);
      if (r === 2) head.className = 'sel';

      for (let c = 0; c < 21; c++) {
        const cell = row.insertCell();
        cell.textContent = data[c] || (c === 12 ? '1' : c === 13 ? '2020' : '');
        if (numeric.includes(c)) cell.classList.add('num');
        if (c > 10 && c < 14) cell.classList.add('calc');
        if (r === 2 && c === 10) cell.classList.add('active');
      }
    });
  </script>
</body>
</html>
```
FILE: styles.css
```css
* {
  box-sizing: border-box;
}
body {
  margin: 0;
  height: 100vh;
  padding: 21px 0 22px;
  display: flex;
  flex-direction: column;
  overflow: hidden;
  background: #000;
  color: #45434a;
  font-family: "Open Sans", "Noto Sans", sans-serif;
  font-size: 8px;
  line-height: 11px;
}
a {
  color: inherit;
  text-decoration: none;
}
p, h1, h2, ol {
  margin: 0;
  padding: 0;
}
button, input, select {
  font: inherit;
  color: inherit;
  background: none;
  border: 0;
  margin: 0;
  padding: 0;
  min-width: 0;
  appearance: none;
}
input::placeholder {
  color: inherit;
  opacity: 1;
}
svg {
  flex: none;
  fill: none;
  stroke: currentColor;
  stroke-width: 1.2;
}
.sprite {
  display: none;
}
.i4 { width: 4px; height: 4px; stroke-width: 3; }
.i5 { width: 5px; height: 5px; stroke-width: 2.4; }
.i6 { width: 7px; height: 7px; stroke-width: 2; }
.i8 { width: 8px; height: 8px; stroke-width: 1.6; }
.i9 { width: 9px; height: 9px; stroke-width: 1.5; }
.i11 { width: 11px; height: 11px; stroke-width: 1.3; }
.i12 { width: 12px; height: 12px; stroke-width: 1.3; }
.i14 { width: 14px; height: 14px; stroke-width: 1.2; }
.off { opacity: .35; }
.dark { color: #222; }
.ib {
  display: flex;
  align-items: center;
}

/* outer browser */
.tabstrip {
  display: flex;
  align-items: center;
  height: 36px;
  flex: none;
  background: #f4f1f8;
  font-size: 10px;
}
.view {
  width: 36px;
  height: 36px;
  padding-left: 10px;
  border-right: 1px solid #d6d2da;
}
.ftab {
  display: flex;
  align-items: center;
  gap: 3px;
  width: 187px;
  height: 30px;
  padding: 0 6px 0 10px;
  margin-right: 6px;
  border-radius: 4px;
}
.ftab span {
  flex: 1;
  overflow: hidden;
  white-space: nowrap;
  color: #2f2d33;
}
.ftab.on {
  padding: 0 10px 0 8px;
  margin-right: 12px;
  background: #fff;
  box-shadow: 0 0 3px #aaa6b0;
}
.wincontrols {
  display: flex;
  align-items: center;
  gap: 30px;
  margin-left: auto;
  padding-right: 14px;
}
.gap {
  margin-left: 31px;
}
.navbar {
  display: flex;
  align-items: center;
  gap: 17px;
  height: 36px;
  flex: none;
  padding: 0 14px 0 13px;
  background: #fff;
  color: #5f5c64;
}
.urlbar {
  display: flex;
  align-items: center;
  gap: 9px;
  flex: 1;
  max-width: 660px;
  height: 28px;
  margin-left: 74px;
  padding: 0 6px;
  border-radius: 4px;
  background: #f4f1f8;
}
.url {
  flex: 1;
  font-size: 11px;
  color: #88858c;
  white-space: nowrap;
}
.url b {
  font-weight: 400;
  color: #222;
}
.zoom {
  padding: 4px 5px;
  border-radius: 3px;
  background: #fff;
  font-size: 9px;
  color: #222;
}
.tools {
  display: flex;
  gap: 18px;
  margin-left: auto;
}
.bookmarks {
  display: flex;
  align-items: center;
  gap: 9px;
  height: 22px;
  flex: none;
  padding: 0 9px;
  background: #fff;
  border-bottom: 1px solid #eae6ee;
  font-size: 10px;
}
.bookmarks a {
  display: flex;
  align-items: center;
  gap: 3px;
  white-space: nowrap;
}

/* lab area */
.lab {
  position: relative;
  display: flex;
  flex: 1;
  min-height: 0;
  background: #fff;
}
.vm {
  display: flex;
  flex-direction: column;
  flex: 1;
  min-width: 0;
  background: #fff;
  font-family: Roboto, sans-serif;
}
.vmbar {
  display: flex;
  align-items: center;
  justify-content: center;
  gap: 5px;
  height: 11px;
  flex: none;
  background: #252428;
}
.edgetabs {
  display: flex;
  align-items: center;
  height: 19px;
  flex: none;
  padding-left: 7px;
  gap: 11px;
  background: #d3d3d3;
  font-size: 7px;
}
.etab {
  display: flex;
  align-items: center;
  gap: 5px;
  width: 134px;
  height: 19px;
  padding: 0 4px;
}
.etab + .etab {
  margin-left: -11px;
}
.etab span {
  flex: 1;
}
.etab.on {
  background: #fdfcfe;
  border-radius: 4px 4px 0 0;
}
.ewin {
  display: flex;
  gap: 19px;
  margin-left: auto;
  padding-right: 10px;
}
.edgebar {
  display: flex;
  align-items: center;
  gap: 14px;
  height: 22px;
  flex: none;
  padding: 0 6px 0 10px;
}
.eurl {
  display: flex;
  align-items: center;
  flex: 1;
  gap: 9px;
  min-width: 0;
  padding: 0 10px 0 8px;
  color: #77747a;
}
.eurl a {
  flex: 1;
  font-family: Lato, sans-serif;
  white-space: nowrap;
}
.eurl b {
  font-weight: 400;
  color: #222;
}
.aloud {
  display: flex;
  font-size: 9px;
}
sup {
  font-size: 5px;
  line-height: 0;
}
.etools {
  display: flex;
  align-items: center;
  gap: 14px;
}
.favbar {
  display: flex;
  align-items: center;
  height: 18px;
  flex: none;
  padding: 0 6px;
  font-size: 7px;
  color: #222;
}
.favbar > a {
  display: flex;
  gap: 3px;
  width: 70px;
  border-right: 1px solid #ccc;
}
.favbar p {
  padding-left: 8px;
}
.favbar p a {
  color: #1a6fc4;
  text-decoration: underline;
}

/* excel */
.excel {
  display: flex;
  flex-direction: column;
  flex: 1;
  min-height: 0;
  margin-left: 2px;
  border-top: 1px solid #efeaf2;
  background: #fcfafd;
}
.xhead {
  display: flex;
  align-items: center;
  height: 26px;
  flex: none;
  padding: 0 7px 0 9px;
}
.xhead h1 {
  margin: 0 6px 0 14px;
  font-size: 8px;
  font-weight: 400;
}
.xhead .i11 {
  margin-left: 17px;
}
.xhead .i5 {
  margin-left: 19px;
}
.xsearch {
  display: flex;
  align-items: center;
  gap: 6px;
  width: 266px;
  height: 20px;
  margin-left: 117px;
  padding: 0 9px;
  background: #fff;
  border: 1px solid #ece7ef;
  border-radius: 3px;
  color: #77747a;
}
.xsearch input {
  flex: 1;
}
.gear {
  margin-left: auto;
}
.avatar {
  width: 18px;
  height: 18px;
  margin-left: 14px;
  border: 1px solid #777;
  border-radius: 50%;
  font-size: 7px;
  line-height: 16px;
  text-align: center;
}
.xtabs {
  display: flex;
  align-items: center;
  gap: 12px;
  height: 22px;
  flex: none;
  padding: 0 5px 0 11px;
  white-space: nowrap;
}
.xtabs .on {
  font-weight: 700;
  border-bottom: 2px solid #2b8a64;
  margin-top: 3px;
  padding-bottom: 1px;
}
.design {
  font-weight: 500;
  color: #217a4b;
}
.xactions {
  display: flex;
  gap: 5px;
  margin-left: auto;
  font-size: 7px;
}
.xactions button {
  display: flex;
  align-items: center;
  gap: 3px;
  height: 14px;
  padding: 0 4px;
  border: 1px solid #d8d5db;
  border-radius: 2px;
  background: #fff;
}
.xactions .share {
  background: #14864a;
  border-color: #14864a;
  color: #fff;
  font-weight: 500;
}
.ribbon {
  display: flex;
  height: 55px;
  flex: none;
  margin: 0 6px 0 4px;
  padding: 2px 0 1px;
  background: #fff;
  border-radius: 4px;
  box-shadow: 0 1px 2px #c6c2ca;
  font-family: "Open Sans", sans-serif;
  font-size: 7px;
  line-height: 9px;
}
.group {
  display: flex;
  flex-direction: column;
  align-items: center;
  justify-content: space-between;
  border-right: 1px solid #d5d2d8;
  white-space: nowrap;
}
.group small {
  font-size: 6px;
  line-height: 9px;
  color: #66636a;
}
.group button {
  display: flex;
  align-items: center;
  gap: 2px;
}
.group .row {
  display: flex;
}
.group .big {
  flex-direction: column;
  gap: 0;
  padding-top: 5px;
}
.big > svg:first-child {
  margin-bottom: 4px;
}
.big > .i4 {
  margin-top: 2px;
}
.undo { width: 26px; }
.clip { width: 50px; }
.font { width: 153px; }
.align { width: 139px; }
.number { width: 94px; }
.styles { width: 108px; }
.cells { width: 77px; }
.edit { width: 112px; }
.addins { width: 36px; }
.copilot { width: 31px; border: 0; }
.undo small, .undo .stack { opacity: .5; }
.stack {
  display: flex;
  flex-direction: column;
  gap: 8px;
  padding-top: 8px;
}
.clip .row {
  gap: 9px;
}
.clip .stack {
  gap: 6px;
  padding-top: 2px;
}
.combos {
  width: 100%;
  padding: 6px 0 0 4px;
}
.combos button {
  width: 16px;
  height: 13px;
  gap: 0;
  justify-content: center;
  align-items: flex-start;
  font-size: 8px;
  line-height: 13px;
}
.combos svg {
  margin-top: 3px;
}
.group select {
  height: 13px;
  padding: 0 5px;
  border: 1px solid #d8d5db;
  border-radius: 2px;
  background: #fff url("data:image/svg+xml,%3Csvg xmlns='http://www.w3.org/2000/svg' viewBox='0 0 8 8'%3E%3Cpath d='M1 2l3 3 3-3' fill='none' stroke='%23666' stroke-width='1.500'/%3E%3C/svg%3E") no-repeat right 2px center / 4px 4px;
}
.group .fname {
  width: 73px;
}
.group .fsize {
  width: 28px;
  border-left: 0;
}
.combos .smaller {
  font-size: 7px;
}
.letters {
  gap: 8px;
  font-size: 8px;
}
.letters button {
  min-width: 8px;
  justify-content: center;
}
.dbl {
  border-bottom: 1px solid;
}
.align .row {
  width: 100%;
  padding-left: 8px;
}
.alignicons {
  display: grid;
  grid-template-columns: repeat(3, 8px);
  gap: 7px 8px;
  padding-top: 3px;
}
.picked {
  outline: 1px solid #8d8a93;
  outline-offset: 2px;
  background: #e8e4ee;
}
.rot {
  align-self: flex-end;
  margin: 0 4px 2px 3px;
}
.wrap {
  display: flex;
  flex-direction: column;
  gap: 7px;
  padding: 8px 0 0 7px;
  border-left: 1px solid #d5d2d8;
}
.group .fnum {
  width: 73px;
  margin-top: 6px;
}
.syms {
  gap: 7px;
  font-size: 8px;
}
.styles .row {
  gap: 2px;
}
.cells .row {
  gap: 3px;
}
.sums {
  display: flex;
  flex-direction: column;
  gap: 5px;
  padding: 3px 4px 0 0;
}
.edit .row {
  gap: 2px;
}
.collapse {
  margin: auto 5px 3px auto;
}
.formulabar {
  display: flex;
  gap: 4px;
  height: 15px;
  flex: none;
  margin: 2px 6px 0 4px;
  font-size: 8px;
}
.formulabar > * {
  display: flex;
  align-items: center;
  background: #fff;
  border: 1px solid #e4e0e7;
  border-radius: 2px;
}
.namebox {
  width: 70px;
  padding: 0 2px;
}
.fx {
  gap: 5px;
  padding: 0 5px 0 3px;
  font-family: "Liberation Serif", serif;
  font-size: 10px;
}
.formula {
  flex: 1;
  padding: 0 5px;
}
.formulabar input {
  flex: 1;
}

/* grid */
.gridbox {
  display: flex;
  flex: 1;
  min-height: 0;
  padding-top: 8px;
  background: #f8f4fa;
}
.gridview {
  flex: 1;
  overflow: hidden;
  background: #fff;
}
.grid {
  width: 100%;
  height: 215px;
  table-layout: fixed;
  border-collapse: separate;
  border-spacing: 0;
  font-family: Lato, sans-serif;
  font-size: 8px;
  line-height: 10px;
  color: #222;
}
.w25 { width: 25px; }
.w27 { width: 27px; }
.w30 { width: 30px; }
.w31 { width: 31px; }
.w34 { width: 34px; }
.w37 { width: 37px; }
.w40 { width: 40px; }
.w42 { width: 42px; }
.w44 { width: 44px; }
.w56 { width: 56px; }
.w57 { width: 57px; }
.w59 { width: 59px; }
.grid th {
  padding: 0 2px 0 0;
  text-align: right;
  font-weight: 400;
  color: #85828a;
  border-right: 1px solid #e2dfe4;
  border-bottom: 1px solid #e2dfe4;
}
.grid .heads th {
  text-align: center;
}
.grid td {
  padding: 0 2px 0 1px;
  border-right: 1px solid #e2dfe4;
  border-bottom: 1px solid #e2dfe4;
  white-space: nowrap;
}
.grid .titles td {
  height: 23px;
  padding-right: 0;
  font-weight: 700;
  line-height: 11px;
  vertical-align: top;
  color: #000;
}
.grid .titles td, .grid .titles th {
  border-bottom: 1px solid #99969d;
}
.grid td.num {
  text-align: right;
}
.grid td.calc {
  background: #ded9df;
  border-color: #ded9df;
}
.grid td.active {
  outline: 1px solid #217346;
}
.grid th.sel {
  background: #cdebdf;
  color: #217346;
  border-bottom-color: #217346;
}
.corner {
  background: linear-gradient(135deg, #fff 70%, #bbb 70%);
}
.vscroll {
  display: flex;
  flex-direction: column;
  align-items: center;
  width: 8px;
  padding: 36px 0 3px;
}
.vscroll .thumb {
  width: 4px;
  height: 25px;
  margin: 4px 0 auto;
  border-radius: 2px;
  background: #8b888f;
}
.hscroll {
  display: flex;
  align-items: center;
  height: 7px;
  flex: none;
  padding: 0 12px 0 26px;
}
.hscroll .thumb {
  width: 293px;
  height: 3px;
  margin: 0 auto 0 4px;
  border-radius: 2px;
  background: #9a969d;
}
.tri {
  border: 2px solid transparent;
}
.tri.up { border-bottom-color: #777; }
.tri.dn { border-top-color: #777; }
.tri.lf { border-right-color: #777; }
.tri.rt { border-left-color: #777; }
.sheets {
  display: flex;
  align-items: center;
  gap: 10px;
  height: 18px;
  flex: none;
  padding-left: 5px;
}
.sheets a {
  border-bottom: 2px solid #2b8a64;
  padding-top: 2px;
  line-height: 13px;
  color: #222;
}
.status {
  display: flex;
  align-items: center;
  justify-content: space-between;
  height: 15px;
  flex: none;
  padding: 0 14px 0 11px;
  border: 1px solid #e2dde5;
  font-size: 7px;
}
.status div {
  display: flex;
  align-items: center;
  gap: 10px;
}
.taskbar {
  display: flex;
  align-items: center;
  height: 25px;
  flex: none;
  padding-right: 10px;
  background: #f3ebf3;
}
.apps {
  display: flex;
  align-items: center;
  gap: 11px;
  padding-left: 329px;
}
.tsearch {
  display: flex;
  align-items: center;
  gap: 3px;
  width: 44px;
  height: 17px;
  margin-left: 5px;
  padding-left: 3px;
  font-size: 7px;
  border-radius: 8px;
  background: #f8f1f8;
}
.tsearch input {
  flex: 1;
}
.running {
  display: flex;
  padding: 3px 0 1px;
  border-bottom: 2px solid #1273c4;
}
.tray {
  display: flex;
  align-items: center;
  gap: 6px;
  margin-left: auto;
  font-size: 7px;
  line-height: 9px;
  text-align: right;
  color: #222;
}
.splitter {
  position: relative;
  z-index: 1;
  display: flex;
  align-items: center;
  justify-content: center;
  width: 2px;
  background: #17161a;
}
.splitter i {
  flex: none;
  width: 6px;
  height: 11px;
  border: 1px solid #111;
  border-radius: 2px;
  background: #777;
}

/* instructions */
.panel {
  position: relative;
  display: flex;
  flex-direction: column;
  width: 222px;
  background: #fff;
}
.brand {
  display: flex;
  align-items: center;
  justify-content: space-between;
  height: 35px;
  padding: 0 8px 0 7px;
}
.brand strong {
  font-family: Lato, sans-serif;
  font-weight: 900;
  font-size: 17px;
  color: #0f6fdb;
}
.brand a {
  display: flex;
  align-items: center;
  gap: 2px;
}
.ptabs {
  display: flex;
  align-items: center;
  gap: 9px;
  height: 23px;
  padding: 0 10px 0 7px;
  border-bottom: 1px solid #e2dfe5;
}
.ptabs a {
  height: 22px;
  line-height: 23px;
}
.ptabs .on {
  border-bottom: 2px solid #0f6fdb;
}
.ptabs svg:first-of-type {
  margin-left: auto;
}
.content {
  position: relative;
  flex: 1;
  min-height: 0;
  overflow: hidden;
  padding: 17px 8px 0 7px;
}
.content h2 {
  padding-bottom: 9px;
  margin-bottom: 9px;
  border-bottom: 1px solid #4f93d6;
  font-family: Lato, sans-serif;
  font-weight: 900;
  font-size: 14px;
  line-height: 18px;
  color: #2b292e;
}
.content p, .content li {
  line-height: 12px;
  white-space: nowrap;
}
.content ol {
  padding-left: 8px;
  margin-top: 10px;
  list-style-position: outside;
}
.content li {
  margin-bottom: 8px;
}
code {
  font: inherit;
  padding: 0 3px;
  border: 1px solid #e6e3e9;
  border-radius: 2px;
}
code svg {
  margin-right: 4px;
  vertical-align: -2px;
}
code.block {
  display: block;
  margin-right: 9px;
  padding: 1px 3px;
  line-height: 11px;
}
.note {
  display: flex;
  gap: 4px;
  margin: 9px 9px 0 0;
  padding: 8px 6px;
  border: 1px solid #dedbe2;
  border-radius: 3px;
}
.verify {
  width: 86px;
  height: 19px;
  margin-top: 12px;
  border-radius: 4px;
  background: #0f78e4;
  color: #fff;
  font-weight: 600;
  font-size: 9px;
}
.pthumb {
  position: absolute;
  right: 1px;
  top: 9px;
  width: 2px;
  height: 265px;
  background: #8b888f;
}
.pfoot {
  padding: 8px 8px 8px 7px;
  border-top: 1px solid #dcd9e0;
  color: #1567b8;
  font-size: 9px;
}
.steps {
  display: flex;
  gap: 8px;
}
.steps button {
  display: flex;
  align-items: center;
  flex: 1;
  height: 18px;
  padding: 0 5px;
  border: 1px solid #2f7cc4;
  border-radius: 3px;
}
.steps span {
  flex: 1;
}
.prev span {
  padding-right: 9px;
}
.next span {
  padding-left: 9px;
}
.time {
  display: flex;
  align-items: center;
  gap: 9px;
  margin-top: 10px;
  font-size: 8px;
  white-space: nowrap;
}
.time progress {
  flex: 1;
  width: 50px;
  height: 4px;
  border: 0;
  appearance: none;
}
progress::-webkit-progress-bar {
  background: #bcc9e6;
  border-radius: 2px;
}
progress::-webkit-progress-value {
  background: #0f6fdb;
  border-radius: 2px;
}
.hand {
  position: absolute;
  left: 67px;
  top: 304px;
  width: 22px;
  height: 28px;
}

/* darkening towards the bottom of the video frame */
.shade {
  position: absolute;
  inset: 0;
  pointer-events: none;
  background: linear-gradient(transparent 56%, rgba(0, 0, 0, .05) 60%, rgba(0, 0, 0, .2) 86%, rgba(0, 0, 0, .23));
}
```
